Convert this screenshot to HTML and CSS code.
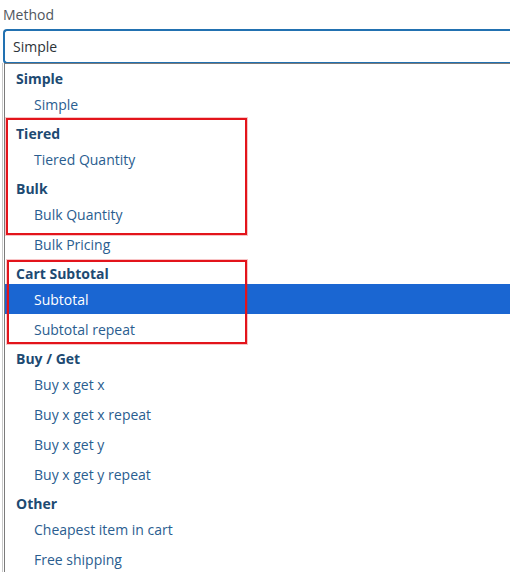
FILE: index.html
```html
<!DOCTYPE html>
<html>
<head>
<meta charset="utf-8">
<link rel="stylesheet" href="styles.css">
</head>
<body>
<div class="field">
  <div class="label">Method</div>
  <div class="select">Simple</div>
  <ul class="dropdown">
    <li class="group">Simple</li>
    <li class="opt">Simple</li>
    <li class="group">Tiered</li>
    <li class="opt">Tiered Quantity</li>
    <li class="group">Bulk</li>
    <li class="opt">Bulk Quantity</li>
    <li class="opt">Bulk Pricing</li>
    <li class="group">Cart Subtotal</li>
    <li class="opt active">Subtotal</li>
    <li class="opt">Subtotal repeat</li>
    <li class="group">Buy / Get</li>
    <li class="opt">Buy x get x</li>
    <li class="opt">Buy x get x repeat</li>
    <li class="opt">Buy x get y</li>
    <li class="opt">Buy x get y repeat</li>
    <li class="group">Other</li>
    <li class="opt">Cheapest item in cart</li>
    <li class="opt">Free shipping</li>
  </ul>
  <div class="mark mark-a"></div>
  <div class="mark mark-b"></div>
</div>
</body>
</html>
```
FILE: styles.css
```css
html, body {
  margin: 0;
  padding: 0;
  background: #fff;
  overflow: hidden;
}
body {
  font-family: "Open Sans", "Noto Sans", sans-serif;
  font-size: 14px;
  width: 510px;
  height: 572px;
}
.field {
  position: relative;
  width: 510px;
  height: 572px;
  overflow: hidden;
}
.label {
  padding: 5px 0 0 3px;
  line-height: 20px;
  margin-bottom: 4px;
  color: #50575e;
}
.select {
  margin-left: 3px;
  height: 35px;
  box-sizing: border-box;
  border: 2px solid #2271b1;
  border-right: none;
  border-radius: 4px 0 0 4px;
  padding-left: 8px;
  line-height: 31px;
  color: #2c3338;
}
.dropdown {
  list-style: none;
  margin: -1px 0 0 4px;
  padding: 0;
  background: #fff;
  border-top: 1px solid #7a7a7a;
  border-left: 1px solid #7a7a7a;
  box-shadow: -1px 0 0 #fff, -2px 0 0 #c9c9c9;
}
.group {
  height: 25px;
  box-sizing: border-box;
  padding: 5px 0 0 11px;
  line-height: 20px;
  font-weight: bold;
  color: #1d4a72;
}
.opt {
  height: 30px;
  box-sizing: border-box;
  padding: 2px 0 0 29px;
  line-height: 28px;
  color: #2a5d8f;
}
.opt.active {
  background: #1a66d2;
  color: #fff;
}
.mark {
  position: absolute;
  box-sizing: border-box;
  border: 2px solid #e3141b;
  box-shadow: 0 0 0 1px rgba(227, 20, 27, 0.25);
}
.mark-a {
  left: 6px;
  top: 118px;
  width: 241px;
  height: 117px;
}
.mark-b {
  left: 7px;
  top: 260px;
  width: 240px;
  height: 84px;
}
```
